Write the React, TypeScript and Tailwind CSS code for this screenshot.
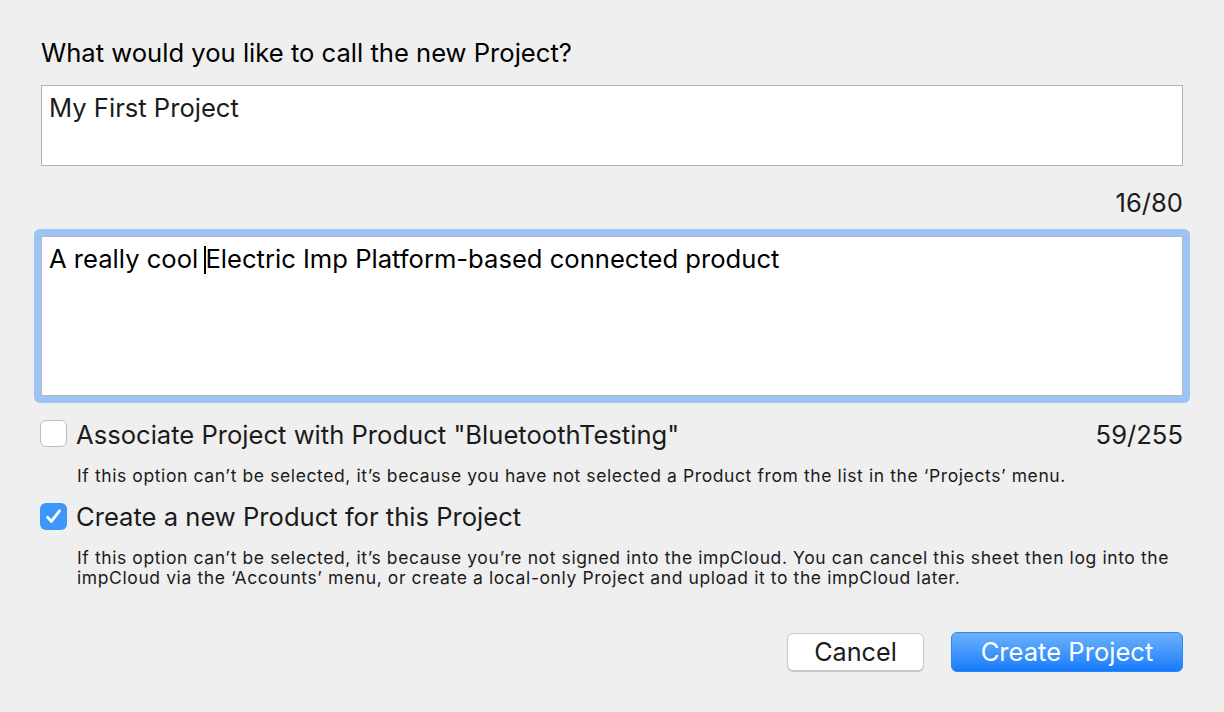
import React from "react";

export default function App() {
  const font = { fontFamily: "Inter, 'Noto Sans', sans-serif" };
  return (
    <div className="w-[1224px] h-[712px] bg-[#efefef] text-[#1b1b1b] overflow-hidden" style={font}>
      <div className="px-[41px] pt-[37px] flex flex-col">
        <div className="text-[25.6px] leading-[32px] text-black">What would you like to call the new Project?</div>
        <div className="mt-[16px] h-[81px] bg-white border border-[#b3b3b3] px-[7px] pt-[6px] text-[25.6px] leading-[32px] text-[#1b1b1b]">
          My First Project
        </div>
        <div className="mt-[23px] text-right text-[25.6px] leading-[28px]">16/80</div>
        <div className="mt-[12px] rounded-[6px] bg-[#9cc4f5] p-[7px] -mx-[7px]">
          <div className="h-[160px] bg-white border border-[#b8b8b8] px-[7px] pt-[6px] text-[25.6px] leading-[32px] text-black">
            A really cool <span className="inline-block w-[2px] h-[28px] bg-black align-[-6px] -ml-[1px] -mr-[1px]"></span>Electric Imp Platform-based connected product
          </div>
        </div>
        <div className="mt-[17px] flex items-start justify-between">
          <div className="flex items-start gap-[9px] -ml-[1px]">
            <div className="mt-[0px] w-[27px] h-[27px] rounded-[6px] bg-white border border-[#bdbdbd]"></div>
            <span className="text-[25.6px] leading-[30px]">Associate Project with Product "BluetoothTesting"</span>
          </div>
          <div className="text-[25.6px] leading-[30px]">59/255</div>
        </div>
        <div className="pl-[36px] mt-[16px] text-[17.5px] leading-[20px] tracking-[0.6px]">
          If this option can’t be selected, it’s because you have not selected a Product from the list in the ‘Projects’ menu.
        </div>
        <div className="mt-[16px] flex items-start gap-[9px] -ml-[1px]">
          <div className="mt-[1px] w-[27px] h-[27px] rounded-[6px] bg-[#3d97fb] flex items-center justify-center">
            <svg width="21" height="21" viewBox="0 0 21 21" fill="none">
              <path d="M4.5 11.2 L8.4 15.4 L16.5 4.8" stroke="white" strokeWidth="2.8" strokeLinecap="round" strokeLinejoin="round" />
            </svg>
          </div>
          <span className="text-[25.6px] leading-[30px]">Create a new Product for this Project</span>
        </div>
        <div className="pl-[36px] mt-[16px] text-[17.5px] leading-[20px] tracking-[0.6px]">
          If this option can’t be selected, it’s because you’re not signed into the impCloud. You can cancel this sheet then log into the impCloud via the ‘Accounts’ menu, or create a local-only Project and upload it to the impCloud later.
        </div>
        <div className="mt-[44px] flex justify-end items-center gap-[27px]">
          <button className="w-[137px] h-[38px] rounded-[6px] bg-white border border-[#c9c9c9] shadow-[0_1px_1px_rgba(0,0,0,0.18)] text-[25.2px] leading-[28px] text-[#1b1b1b] flex items-center justify-center">
            Cancel
          </button>
          <button className="w-[232px] h-[40px] rounded-[6px] bg-gradient-to-b from-[#6ab2fb] to-[#117afb] border border-[#2c86f6] text-[25.6px] leading-[28px] text-white flex items-center justify-center">
            Create Project
          </button>
        </div>
      </div>
    </div>
  );
}
